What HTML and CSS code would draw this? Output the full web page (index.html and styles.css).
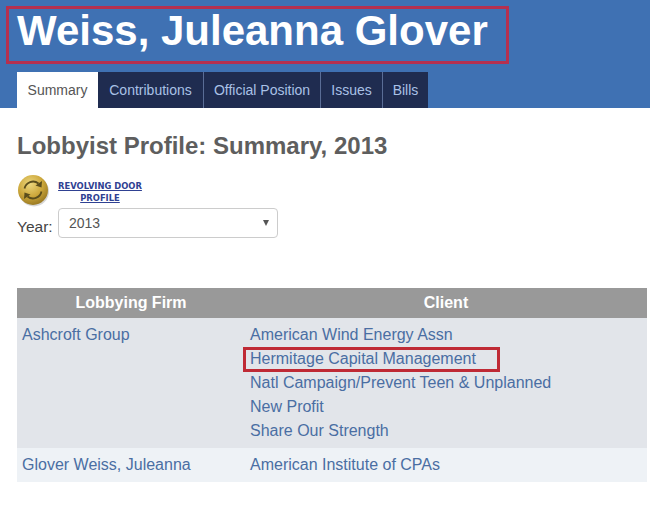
FILE: index.html
```html
<!DOCTYPE html>
<html lang="en">
<head>
<meta charset="utf-8">
<title>Weiss, Juleanna Glover</title>
<link rel="stylesheet" href="styles.css">
</head>
<body>
<header class="banner">
  <h1 class="name">Weiss, Juleanna Glover</h1>
  <nav class="tabs">
    <a class="tab active tab-summary" href="#">Summary</a>
    <a class="tab tab-contrib" href="#">Contributions</a>
    <a class="tab tab-official" href="#">Official Position</a>
    <a class="tab tab-issues" href="#">Issues</a>
    <a class="tab tab-bills" href="#">Bills</a>
  </nav>
</header>
<main class="content">
  <h2 class="title">Lobbyist Profile: Summary, 2013</h2>
  <div class="revolving">
    <svg class="coin" width="34" height="34" viewBox="0 0 34 34" aria-hidden="true">
      <defs>
        <radialGradient id="gold" cx="40%" cy="30%" r="75%">
          <stop offset="0" stop-color="#ecd77e"/>
          <stop offset="0.55" stop-color="#cda83c"/>
          <stop offset="1" stop-color="#94741f"/>
        </radialGradient>
      </defs>
      <circle cx="17" cy="17.500" r="15" fill="#bbb" opacity="0.6"/>
      <circle cx="16" cy="16" r="15" fill="url(#gold)"/>
      <path d="M7.500 14.500A8.700 8.700 0 0 1 21.500 9.500" fill="none" stroke="#5a4d1c" stroke-width="1.800"/>
      <path d="M25 7L24.500 13.500L18.500 11.500Z" fill="#5a4d1c"/>
      <path d="M24.500 17.500A8.700 8.700 0 0 1 10.500 22.500" fill="none" stroke="#5a4d1c" stroke-width="1.800"/>
      <path d="M7 25L7.500 18.500L13.500 20.500Z" fill="#5a4d1c"/>
    </svg>
    <a class="door-link" href="#">REVOLVING DOOR<br>PROFILE</a>
  </div>
  <div class="year-row">
    <label class="year-label">Year:</label>
    <div class="select"><span>2013</span><span class="caret"></span></div>
  </div>
  <table class="grid">
    <thead>
      <tr><th class="col-firm">Lobbying Firm</th><th>Client</th></tr>
    </thead>
    <tbody>
      <tr class="odd">
        <td><a href="#">Ashcroft Group</a></td>
        <td>
          <a href="#">American Wind Energy Assn</a>
          <span class="marked"><a href="#">Hermitage Capital Management</a></span>
          <a href="#">Natl Campaign/Prevent Teen &amp; Unplanned</a>
          <a href="#">New Profit</a>
          <a href="#">Share Our Strength</a>
        </td>
      </tr>
      <tr class="even">
        <td><a href="#">Glover Weiss, Juleanna</a></td>
        <td><a href="#">American Institute of CPAs</a></td>
      </tr>
    </tbody>
  </table>
</main>
</body>
</html>
```
FILE: styles.css
```css
*, *::after { box-sizing: border-box; }
html, body { margin: 0; padding: 0; }
body {
  width: 650px;
  height: 506px;
  overflow: hidden;
  background: #fff;
  font-family: "Liberation Sans", Arial, sans-serif;
  color: #555;
}
a { text-decoration: none; }

.banner {
  height: 108px;
  background: #3f71b3;
  padding: 6px 0 0 6px;
  display: flex;
  flex-direction: column;
  align-items: flex-start;
}
.name {
  margin: 0;
  width: 503px;
  height: 58px;
  border: 3px solid #b5304f;
  padding: 0 0 0 8px;
  color: #fff;
  font-size: 42px;
  line-height: 44px;
  font-weight: 700;
  white-space: nowrap;
}
.tabs {
  display: flex;
  margin: 8px 0 0 11px;
  height: 36px;
}
.tab {
  display: block;
  background: #1f2c50;
  color: #a9c1e6;
  font-size: 14px;
  line-height: 36px;
  text-align: center;
  border-left: 1px solid #5a6d96;
}
.tab.active {
  background: #fff;
  color: #555;
  border-left: 0;
}
.tab.active + .tab { border-left: 0; }
.tab-summary { width: 81px; }
.tab-contrib { width: 105px; }
.tab-official { width: 117px; }
.tab-issues { width: 62px; }
.tab-bills { width: 46px; }

.content { padding: 0 3px 0 17px; }
.title {
  margin: 0;
  padding-top: 25px;
  font-size: 24px;
  line-height: 26px;
  font-weight: 700;
  color: #5e5e5e;
}
.revolving {
  display: flex;
  align-items: flex-start;
  margin-top: 15px;
  height: 35px;
}
.coin { display: block; flex: none; }
.door-link {
  display: block;
  width: 84px;
  margin: 6px 0 0 7px;
  color: #2f4192;
  font-family: "DejaVu Sans", sans-serif;
  font-size: 8.400px;
  line-height: 12px;
  font-weight: 700;
  text-align: center;
  text-decoration: underline;
  white-space: nowrap;
}
.year-row {
  display: flex;
  align-items: flex-start;
  margin-top: -1px;
}
.year-label {
  width: 41px;
  padding-top: 9px;
  font-size: 15.500px;
  line-height: 20px;
  color: #444;
}
.select {
  width: 220px;
  height: 30px;
  border: 1px solid #ccc;
  border-radius: 4px;
  padding: 0 10px;
  display: flex;
  align-items: center;
  justify-content: space-between;
  font-size: 14px;
  color: #555;
}
.caret {
  width: 0;
  height: 0;
  margin-right: -2px;
  border-left: 3px solid transparent;
  border-right: 3px solid transparent;
  border-top: 6px solid #555;
}
.grid {
  margin-top: 50px;
  width: 630px;
  border-collapse: collapse;
  table-layout: fixed;
  font-size: 16px;
  line-height: 24px;
}
.grid th {
  height: 30px;
  padding: 0;
  background: #999;
  color: #fff;
  font-size: 16px;
  font-weight: 700;
  text-align: center;
}
.col-firm { width: 228px; }
.grid td {
  padding: 5px;
  vertical-align: top;
}
.grid td a { display: block; color: #4a6ea3; }
.odd td { background: #e2e5ea; }
.even td { background: #eef2f6; }
.marked { display: block; position: relative; }
.marked::after {
  content: "";
  position: absolute;
  left: -7px;
  top: 0;
  width: 257px;
  height: 25px;
  border: 3px solid #bf2a35;
}
```
